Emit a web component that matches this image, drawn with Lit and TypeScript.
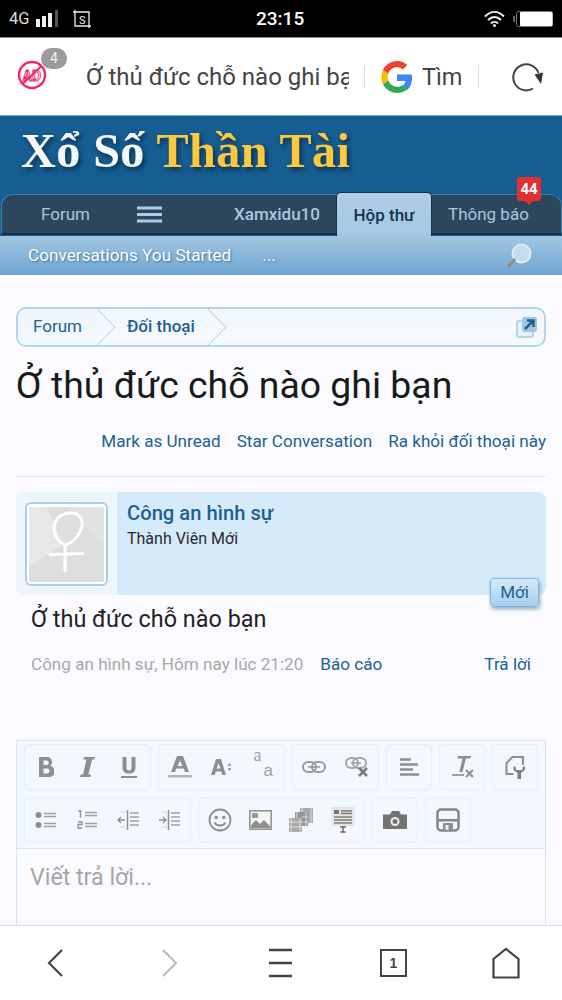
import { LitElement, html, css, svg } from "lit";
import { customElement } from "lit/decorators.js";

const ic = (w: number, h: number, body: unknown, cls = "") =>
  html`<svg class=${cls} width=${w} height=${h} viewBox="0 0 ${w} ${h}" fill="none">${body}</svg>`;

const G = "#8f8f8f";
const row1: { w: number; items: unknown[] }[] = [
  { w: 127, items: [
    ic(16, 20, svg`<path d="M1 0h8a5 5 0 0 1 3.300 8.800A5.600 5.600 0 0 1 9.500 20H1zM5.500 3.500v4.500h3a2.250 2.250 0 0 0 0-4.500zM5.500 11.500v5h3.500a2.500 2.500 0 0 0 0-5z" fill="${G}" fill-rule="evenodd"/>`),
    ic(15, 20, svg`<path d="M4 0h11l-.6 2.500H12L8.500 17.500H11l-.5 2.500H0l.6-2.500H3L6.500 2.500H3.500z" fill="${G}"/>`),
    ic(16, 21, svg`<path d="M1.500 0h4v10.500c0 2 1 3 2.500 3s2.500-1 2.500-3V0h4v10.500c0 4-2.500 6-6.500 6s-6.500-2-6.500-6z" fill="${G}"/><rect x="0" y="19" width="16" height="2" fill="${G}"/>`),
  ] },
  { w: 127, items: [
    ic(24, 22, svg`<path d="M9 0h6l6 16h-4l-1.200-3.500H8.200L7 16H3zM12 4.500 9.500 10h5z" fill="${G}" fill-rule="evenodd"/><rect x="0" y="19" width="24" height="2.500" fill="#b5b5b5"/>`),
    ic(21, 16, svg`<path d="M5 0h5l5 16h-3.800l-1-3.500H4.800l-1 3.500H0zM7.500 4 5.500 9.500h4z" fill="${G}" fill-rule="evenodd"/><path d="m18.500 4 2 2.800h-4zM18.500 12l2-2.800h-4z" fill="${G}"/>`),
    html`<span class="aa"><span class="a1">a</span><span class="a2">a</span></span>`,
  ] },
  { w: 87, items: [
    ic(24, 12, svg`<rect x="1" y="1" width="13" height="10" rx="5" stroke="#9a9a9a" stroke-width="2"/><rect x="10" y="1" width="13" height="10" rx="5" stroke="#9a9a9a" stroke-width="2"/><path d="M6 6h12" stroke="#9a9a9a" stroke-width="1.600"/>`),
    ic(24, 20, svg`<rect x="1" y="1" width="12" height="10" rx="5" stroke="#a4a4a4" stroke-width="2"/><rect x="8" y="1" width="13" height="10" rx="5" stroke="#a4a4a4" stroke-width="2"/><path d="M6 6h10" stroke="#a4a4a4" stroke-width="1.600"/><path d="m14 11 8 8M22 11l-8 8" stroke="#7c7c7c" stroke-width="2.500"/>`),
  ] },
  { w: 46, items: [ic(20, 18, svg`<path d="M1 1.500h11M1 6.500h18M1 11.500h13M1 16.500h19" stroke="${G}" stroke-width="2.400"/>`)] },
  { w: 46, items: [ic(23, 23, svg`<path d="M7 0h13l-.6 2.500h-4.500L11.500 16H8.300L11.600 2.500H6.500z" fill="${G}"/><rect x="1" y="18" width="12" height="2" fill="#a0a0a0"/><path d="m15 14 7 7M22 14l-7 7" stroke="${G}" stroke-width="2"/>`)] },
  { w: 46, items: [ic(21, 23, svg`<path d="M8.500 18H1.500V7L7.500 1H18V9" stroke="${G}" stroke-width="2" fill="none"/><path d="M8.500 10v4l4 3v6h3.500v-6l4-3v-4l-2.500 1.500v2.500h-6.500v-2.500z" fill="#7f7f7f"/>`)] },
];
const row2: { w: number; items: unknown[] }[] = [
  { w: 167, items: [
    ic(22, 18, svg`<circle cx="3.500" cy="4" r="3" fill="${G}"/><circle cx="3.500" cy="14" r="3" fill="${G}"/><path d="M9 2.500h12M9 5.500h12M9 12.500h12M9 15.500h12" stroke="#a0a0a0" stroke-width="1.500"/>`),
    ic(20, 20, svg`<path d="M1.500 1.500 3.500.5v7" stroke="${G}" stroke-width="1.400"/><path d="M1 12h4v2.500H1V18h4" stroke="${G}" stroke-width="1.300"/><path d="M8 2.500h12M8 5.500h12M8 13.500h12M8 16.500h12" stroke="#a0a0a0" stroke-width="1.500"/>`),
    ic(24, 22, svg`<path d="M11.500 1v20" stroke="${G}" stroke-width="1.500"/><path d="M14 4h9M14 8h9M14 12h9M14 16h9" stroke="#a0a0a0" stroke-width="1.500"/><path d="M9 11H2m3-3-3 3 3 3" stroke="${G}" stroke-width="1.300"/><path d="M5 3h4M5 18h4" stroke="#bbb" stroke-dasharray="1.500 1"/>`),
    ic(24, 22, svg`<path d="M11.500 1v20" stroke="${G}" stroke-width="1.500"/><path d="M14 4h9M14 8h9M14 12h9M14 16h9" stroke="#a0a0a0" stroke-width="1.500"/><path d="M2 11h7M6 8l3 3-3 3" stroke="${G}" stroke-width="1.300"/><path d="M5 3h4M5 18h4" stroke="#bbb" stroke-dasharray="1.500 1"/>`),
  ] },
  { w: 167, items: [
    ic(24, 24, svg`<circle cx="12" cy="12" r="10.500" stroke="${G}" stroke-width="1.800"/><circle cx="8.200" cy="9.500" r="1.800" fill="${G}"/><circle cx="15.800" cy="9.500" r="1.800" fill="${G}"/><path d="M6.500 14.500c2 4 9 4 11 0" stroke="${G}" stroke-width="1.800"/>`),
    ic(23, 20, svg`<rect x=".8" y=".8" width="21.400" height="18.400" fill="#f4f4f4" stroke="${G}" stroke-width="1.500"/><rect x="3" y="3" width="6" height="5" fill="#9a9a9a"/><path d="M2 18v-3l5-5 4 4 4-4 6 6v2z" fill="${G}"/>`),
    ic(26, 24, svg`<rect x="11" y="0" width="13" height="15" fill="#aaa"/><rect x="6" y="4" width="13" height="14" fill="#959595"/><rect x="0" y="10" width="13" height="14" fill="#aaa"/><path d="M2 10v14M11 10v14M0 14h13M0 19h13M8 4v6M17 4v14M13 0v4M22 0v15M13 9h6M13 14h6" stroke="#ddd"/>`),
    ic(24, 26, svg`<rect x=".5" y="0" width="23" height="19" fill="#e4e4e4"/><rect x="3" y="3" width="5" height="4" fill="#777"/><path d="M10 4h11M10 6.500h11M3 10h18M3 13h18M3 16h18" stroke="#7d7d7d" stroke-width="1.300"/><path d="M9 20h6M12 20v5M9.500 25h5" stroke="#666" stroke-width="1.400"/>`),
  ] },
  { w: 46, items: [ic(26, 20, svg`<path d="M1 4.500h7L10 1h7l2 3.500h6V19H1z" fill="#737373"/><circle cx="13" cy="11.500" r="4.500" fill="#efefef"/><circle cx="13" cy="11.500" r="2.500" fill="#737373"/>`)] },
  { w: 46, items: [ic(24, 24, svg`<rect x="1.500" y="1.500" width="21" height="21" rx="3.500" fill="#f2f8fd" stroke="#858585" stroke-width="2.500"/><rect x="2" y="11" width="20" height="2.500" fill="#858585"/><rect x="7" y="15" width="10" height="7" fill="#8f8f8f"/><rect x="9.500" y="17" width="3" height="5" fill="#eee"/>`)] },
];

@customElement("app-root")
export class AppRoot extends LitElement {
  static styles = css`
    :host { display: block; width: 562px; height: 1000px; overflow: hidden; position: relative; font-family: Roboto, "Noto Sans", sans-serif; background: #fbfbff; }
    a { color: #22618f; text-decoration: none; }
    .status { height: 37px; background: #000; color: #fff; display: flex; align-items: center; padding: 0 9px 0 9px; border-bottom: 1px solid #8d8d8d; position: relative; }
    .net { font-size: 16.500px; margin-right: 6px; color: #ddd; }
    .shot { margin-left: 14px; }
    .time { position: absolute; left: 256px; top: 7px; font-size: 19px; font-weight: 500; line-height: 24px; }
    .status .right { margin-left: auto; display: flex; align-items: center; gap: 8px; }
    .browser { height: 77px; background: #fff; display: flex; align-items: center; position: relative; color: #444; }
    .ad { margin-left: 17px; width: 30px; height: 30px; margin-top: -3px; flex: none; }
    .count { position: absolute; left: 41px; top: 10px; width: 26px; height: 21px; border-radius: 11px; background: #9b9b9b; color: #eee; font-size: 14px; text-align: center; line-height: 21px; }
    .url { margin-left: 39px; font-size: 24px; width: 263px; overflow: hidden; white-space: nowrap; color: #444; flex: none; }
    .sep { width: 1px; height: 22px; background: #ddd; flex: none; }
    .sep.a { margin-left: 15px; }
    .g { margin-left: 16px; flex: none; }
    .tim { font-size: 23.500px; margin-left: 9px; color: #444; width: 40px; margin-right: 16px; }
    .reload { margin-left: 33px; flex: none; }
    .head { background: #165e92; height: 79px; border-top: 1px solid #84a9c2; box-sizing: border-box; padding: 9px 0 0 21px; font-family: "Liberation Serif", serif; font-weight: 700; font-size: 48.200px; line-height: 52px; white-space: nowrap; text-shadow: 2px 3px 5px #0a2e4b; color: #f5f7f9; letter-spacing: 0.400px; }
    .head span { color: #fcc83f; }
    .nav { height: 42px; background: #165e92; position: relative; }
    .tabs { height: 41px; margin: 0 0 0 1px; background: #2c465c; border: 1px solid #3a81b4; border-radius: 12px 12px 0 0; box-sizing: border-box; display: flex; align-items: center; color: #a9c8e0; font-size: 17px; position: relative; border-bottom: 2px solid #13334d; }
    .tabs > * { position: absolute; top: 9px; line-height: 20px; }
    .forum { left: 39px; }
    .user { left: 232px; font-weight: 500; }
    .notes { left: 446px; }
    .tabs .menu { left: 135px; top: 11px; }
    .tabs .active { left: 334px; top: -3px; width: 96px; height: 44px; background: linear-gradient(#b0cfe6, #a3c7e3); border: 1px solid #13334d; border-bottom: none; border-radius: 5px 5px 0 0; box-sizing: border-box; color: #13334d; text-align: center; line-height: 45px; font-weight: 500; }
    .tabs .badge { left: 515px; top: -18px; background: #e03030; color: #fff; font-weight: 700; font-size: 15px; width: 24px; height: 24px; line-height: 24px; text-align: center; border-radius: 3px; }
    .badge::after { content: ""; position: absolute; left: 7px; bottom: -4px; border: 5px solid transparent; border-bottom: 0; border-top-color: #e03030; }
    .sub { height: 39px; background: linear-gradient(#a3c7e3, #6ea5d0); color: #fff; display: flex; align-items: center; font-size: 17.200px; padding: 0 30px 2px 28px; box-sizing: border-box; text-shadow: 1px 1px 2px #3b73a0; }
    .sub .dots { margin-left: 31px; }
    .sub svg { margin-left: auto; margin-top: 2px; }
    .main { padding: 0 16px; }
    .crumbs { margin-top: 32px; height: 40px; border: 2px solid #b2d5ec; border-radius: 10px; box-sizing: border-box; background: linear-gradient(#f1f7fd, #f6fafe); display: flex; align-items: center; overflow: hidden; font-size: 17px; }
    .crumb { padding-left: 15px; width: 80px; box-sizing: border-box; position: relative; height: 100%; line-height: 35px; flex: none; }
    .crumb svg { position: absolute; right: -18px; top: 0; }
    .crumb.first { background: linear-gradient(#eef6fc, #f1f7fd); }
    .crumb.second { padding-left: 29px; width: 111px; font-weight: 500; }
    .crumb.second a { color: #1f5f8f; }
    .ext { margin-left: auto; margin-right: 6px; }
    h1 { margin: 16px 0 0; font-size: 37.400px; font-weight: 400; color: #1a1a1a; line-height: 44px; white-space: nowrap; }
    .links { display: flex; justify-content: flex-end; gap: 16px; margin-top: 24px; font-size: 17.100px; line-height: 20px; }
    .rule { height: 1px; background: #d7ebf8; margin-top: 25px; }
    .msg { margin-top: 15px; height: 103px; background: #d5ebfa; border-radius: 8px; display: flex; position: relative; }
    .av { width: 101px; background: #eef6fd; border-radius: 8px 0 0 8px; flex: none; padding: 10px 0 0 9px; box-sizing: border-box; }
    .frame { width: 83px; height: 84px; border: 2px solid #a9cfe8; border-radius: 6px; background: #fff; box-sizing: border-box; padding: 2.500px 2px; }
    .frame svg { display: block; }
    .info { margin-left: 10px; }
    .name { font-size: 20.200px; font-weight: 500; color: #1f5f8f; line-height: 24px; margin-top: 9px; }
    .role { font-size: 16px; color: #2a2a2a; line-height: 20px; margin-top: 4px; }
    .new { position: absolute; right: 7px; top: 86px; width: 49px; height: 29px; border: 1px solid #7eb5df; border-radius: 4px; background: linear-gradient(#d5ebfa, #a5cfef); color: #1f5f8f; font-size: 17px; text-align: center; line-height: 27px; box-sizing: border-box; box-shadow: 1px 2px 4px #8aa5bb; }
    .body { font-size: 23.400px; color: #222; margin: 11px 0 0 15px; line-height: 26px; }
    .meta { display: flex; font-size: 17.100px; color: #a8a8a8; margin: 22px 15px 0 15px; line-height: 20px; }
    .meta a:first-of-type { margin-left: 17px; }
    .meta a:last-of-type { margin-left: auto; }
    .editor { margin-top: 66px; border: 1px solid #cfe7f9; border-bottom: none; height: 185px; box-sizing: border-box; background: #fbfbff; overflow: hidden; }
    .tools { height: 108px; background: #f2f8fd; border-bottom: 1px solid #d5ebfa; box-sizing: border-box; padding: 3px 0 0 7px; display: flex; flex-direction: column; gap: 7px; }
    .line { display: flex; gap: 7px; height: 46px; }
    .grp { border: 1px solid #e2f0fb; border-radius: 5px; display: flex; align-items: center; height: 46px; box-sizing: border-box; }
    .btn { flex: 1 1 0; height: 100%; display: flex; align-items: center; justify-content: center; }
    .btn svg { flex: none; }
    .aa { display: flex; color: #a0a0a0; line-height: 12px; }
    .a1 { font-family: "Liberation Serif", serif; font-size: 18px; margin-top: -8px; }
    .a2 { font-family: "Liberation Sans", sans-serif; font-size: 17px; margin: 8px 0 0 2px; }
    .ph { font-size: 23.200px; color: #a6a6a6; padding: 14px 13px; line-height: 28px; }
    .bottom { position: absolute; left: 0; top: 925px; width: 562px; height: 75px; background: #fff; border-top: 1px solid #dcdcdc; box-sizing: border-box; display: grid; grid-template-columns: repeat(5, 112.400px); align-items: center; justify-items: center; }
    .bottom svg { margin-top: -1px; }
    .tabbox { width: 27px; height: 28px; border: 2.500px solid #444; box-sizing: border-box; display: flex; align-items: center; justify-content: center; font-size: 14px; font-weight: 700; color: #444; margin-top: -1px; font-family: "Liberation Sans", sans-serif; }
  `;

  group(g: { w: number; items: unknown[] }) {
    return html`<div class="grp" style="width:${g.w}px">${g.items.map((i) => html`<div class="btn">${i}</div>`)}</div>`;
  }

  arrow() {
    return ic(19, 36, svg`<path d="M0 0 18 18 0 36" stroke="#a9cfe8" stroke-width="1"/>`);
  }

  render() {
    return html`
      <div class="status">
        <span class="net">4G</span>
        ${ic(22, 18, svg`<rect x="0" y="9" width="4" height="8" fill="#eee"/><rect x="6" y="6" width="4" height="11" fill="#eee"/><rect x="12" y="3" width="4" height="14" fill="#eee"/><rect x="19" y="0" width="3" height="17" fill="#555"/>`)}
        ${ic(20, 20, svg`<path d="M3 1v16h16" stroke="#eee" stroke-width="1.300"/><path d="M1 3h16v16" stroke="#eee" stroke-width="1.300"/><text x="7" y="14.500" font-size="11" fill="#eee" font-family="Roboto">S</text>`, "shot")}
        <span class="time">23:15</span>
        <div class="right">
          ${ic(21, 16, svg`<path d="M1 5.500c6-6 13-6 19 0M4 9c4-4 9-4 13 0M7 12.500c2-2 5-2 7 0" stroke="#eee" stroke-width="2"/><circle cx="10.500" cy="14.500" r="1.500" fill="#eee"/>`)}
          ${ic(40, 16, svg`<rect x="3.500" y=".5" width="36" height="15" rx="2" stroke="#777"/><rect x="7" y="1" width="32.500" height="14" rx="1" fill="#fff"/><rect x="0" y="5" width="2" height="6" fill="#666"/>`)}
        </div>
      </div>
      <div class="browser">
        <div class="ad">
          ${ic(30, 30, svg`<circle cx="15" cy="15" r="13" stroke="#ee2b66" stroke-width="2.400"/><path d="M5.500 24 24.500 6" stroke="#ee2b66" stroke-width="2"/><text x="5.500" y="21" font-size="14" font-weight="700" fill="none" stroke="#ee2b66" stroke-width=".9" font-family="Roboto">AD</text>`)}
        </div>
        <div class="count">4</div>
        <div class="url">Ở thủ đức chỗ nào ghi bạn</div>
        <div class="sep a"></div>
        ${ic(32, 32, svg`<path d="M31 17c0-1.300-.1-2.300-.3-3.400H16v6.300h8.500c-.4 2.200-1.600 4-3.300 5.200l5.100 4c3-2.800 4.700-7 4.700-12.100z" fill="#4285f4"/><path d="M16 32c4.200 0 7.800-1.400 10.300-3.800l-5.100-4c-1.400 1-3.100 1.500-5.200 1.500-4.100 0-7.500-2.700-8.800-6.400l-5.200 4C4.600 28.500 9.900 32 16 32z" fill="#34a853"/><path d="M7.200 19.300c-.7-2-.7-4.500 0-6.600l-5.200-4c-2.200 4.400-2.200 10.200 0 14.600z" fill="#fbbc05"/><path d="M16 6.300c2.300 0 4.300.8 5.900 2.300l4.500-4.500C23.800 1.600 20.200 0 16 0 9.900 0 4.600 3.500 2 8.700l5.200 4C8.500 9 11.900 6.300 16 6.300z" fill="#ea4335"/>`, "g")}
        <span class="tim">Tìm</span>
        <div class="sep"></div>
        ${ic(32, 30, svg`<path d="M21 26.500A13 13 0 1 1 26.500 11" stroke="#444" stroke-width="2"/><path d="M22.500 12.500 31 10.500 29 22z" fill="#333"/>`, "reload")}
      </div>
      <div class="head">Xổ Số <span>Thần Tài</span></div>
      <div class="nav">
        <div class="tabs">
          <span class="forum">Forum</span>
          ${ic(25, 17, svg`<path d="M0 2h25M0 8.500h25M0 15h25" stroke="#a9cde8" stroke-width="3"/>`, "menu")}
          <span class="user">Xamxidu10</span>
          <span class="active">Hộp thư</span>
          <span class="notes">Thông báo</span>
          <span class="badge">44</span>
        </div>
      </div>
      <div class="sub">
        <span>Conversations You Started</span><span class="dots">...</span>
        ${ic(25, 25, svg`<circle cx="14.500" cy="10.500" r="9" fill="#c4dcee" stroke="#e3ebf1" stroke-width="2"/><path d="M7 17 2 23" stroke="#8d8f8f" stroke-width="3.500" stroke-linecap="round"/>`)}
      </div>
      <div class="main">
        <div class="crumbs">
          <div class="crumb first"><a>Forum</a>${this.arrow()}</div>
          <div class="crumb second"><a>Đối thoại</a>${this.arrow()}</div>
          ${ic(22, 22, svg`<rect x="1" y="5" width="16" height="16" rx="2" stroke="#b5d4ea" stroke-width="2" fill="#e6f1fa"/><rect x="6" y="1" width="15" height="15" rx="2" fill="#9fc6e3"/><path d="M9 13 17 5M11 4.500h6.500V11" stroke="#1f5f8f" stroke-width="2.500"/>`, "ext")}
        </div>
        <h1>Ở thủ đức chỗ nào ghi bạn</h1>
        <div class="links"><a>Mark as Unread</a><a>Star Conversation</a><a>Ra khỏi đối thoại này</a></div>
        <div class="rule"></div>
        <div class="msg">
          <div class="av"><div class="frame">
            ${ic(75, 75, svg`<rect width="75" height="75" fill="#dedede"/><path d="M16 0h24L75 40V0z" fill="#e2e2e2"/><path d="M0 0h18L34 38 0 60z" fill="#e8e8e8"/><path d="M36 38C28 34 24 26 25 19 27 10 34 6 42 6 50 6 54 12 53 19 51 28 44 36 36 38zM36 38V64M21 47.500 54 46.500" stroke="#fff" stroke-width="3" stroke-linecap="round"/>`)}
          </div></div>
          <div class="info"><div class="name">Công an hình sự</div><div class="role">Thành Viên Mới</div></div>
          <div class="new">Mới</div>
        </div>
        <div class="body">Ở thủ đức chỗ nào bạn</div>
        <div class="meta"><span>Công an hình sự, Hôm nay lúc 21:20</span><a>Báo cáo</a><a>Trả lời</a></div>
        <div class="editor">
          <div class="tools">
            <div class="line">${row1.map((g) => this.group(g))}</div>
            <div class="line">${row2.map((g) => this.group(g))}</div>
          </div>
          <div class="ph">Viết trả lời...</div>
        </div>
      </div>
      <div class="bottom">
        ${ic(20, 32, svg`<path d="M16 3 3 16l13 13" stroke="#444" stroke-width="2.200"/>`)}
        ${ic(20, 32, svg`<path d="m4 3 13 13L4 29" stroke="#bcbcbc" stroke-width="2.200"/>`)}
        ${ic(24, 30, svg`<path d="M0 2h23M0 15h23M0 28h23" stroke="#444" stroke-width="2.400"/>`)}
        <div class="tabbox">1</div>
        ${ic(28, 32, svg`<path d="M1.500 30.500V12L14 2l12.500 10v18.500z" stroke="#444" stroke-width="2.200"/>`)}
      </div>
    `;
  }
}
